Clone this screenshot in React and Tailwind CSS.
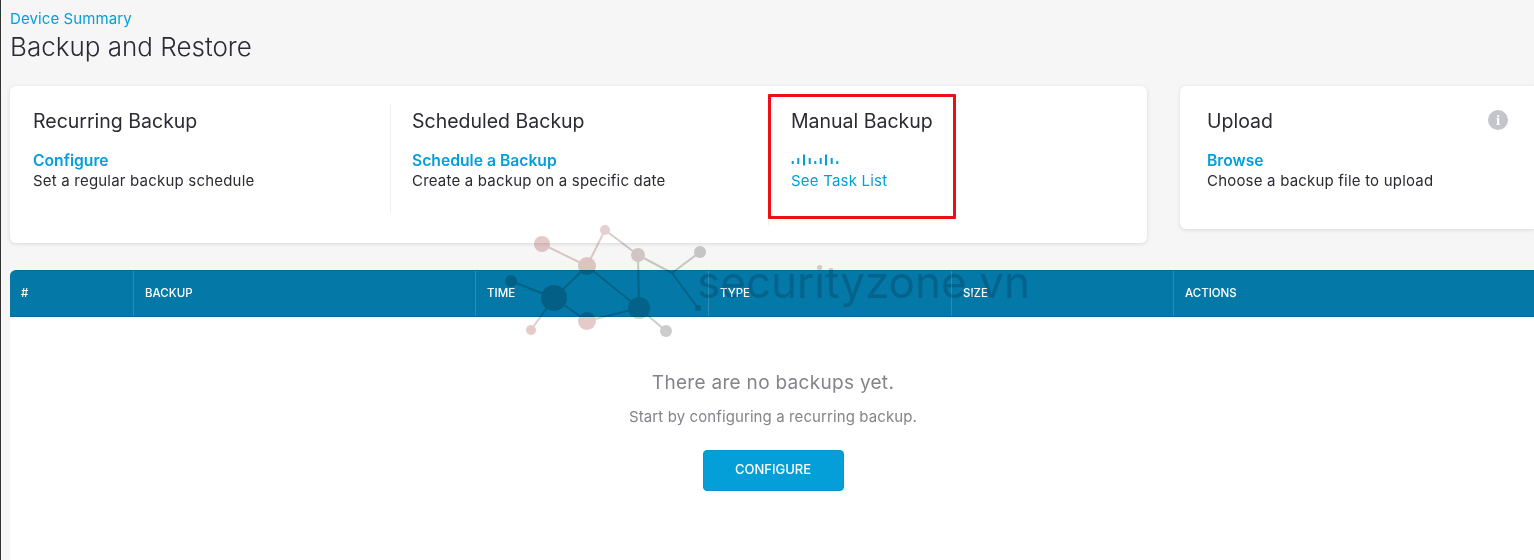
const columns = [
  { label: "#", width: "w-[124px]" },
  { label: "BACKUP", width: "w-[342px]" },
  { label: "TIME", width: "w-[233px]" },
  { label: "TYPE", width: "w-[243px]" },
  { label: "SIZE", width: "w-[222px]" },
  { label: "ACTIONS", width: "flex-1" },
];

function CiscoBars() {
  const bars = [
    [1.7, 7, 3],
    [7.3, 4, 6],
    [13, 0.5, 11],
    [18.7, 4, 6],
    [24.3, 7, 3],
    [29.7, 4, 6],
    [35, 0.5, 11],
    [40.7, 4, 6],
    [46.3, 7, 3],
  ];
  return (
    <div className="pt-[3px]">
      <svg width="48" height="12" viewBox="0 0 48 12" className="block">
        {bars.map(([x, y, h]) => (
          <rect key={x} x={x - 1} y={y} width="2" height={h} fill="#049fd9" />
        ))}
      </svg>
    </div>
  );
}

function Watermark() {
  const lines = [
    [42, 24, 87, 46, "#e2cccc"], [87, 46, 105, 10, "#e2cccc"], [105, 10, 138, 35, "#d8cccc"],
    [138, 35, 172, 53, "#d0cccc"], [200, 32, 172, 53, "#cccccc"], [172, 53, 198, 88, "#cccccc"],
    [87, 46, 54, 78, "#d8cccc"], [87, 46, 139, 88, "#d8cccc"], [138, 35, 139, 88, "#d0cccc"],
    [11, 61, 54, 78, "#d8cccc"], [54, 78, 87, 101, "#e2cccc"], [87, 101, 139, 88, "#e2cccc"],
    [54, 78, 31, 110, "#e2cccc"], [139, 88, 166, 111, "#cccccc"],
  ];
  const nodes = [
    [42, 24, 8, "#e6caca"], [105, 10, 5, "#e4d0d0"], [87, 46, 9, "#e6caca"], [138, 35, 7, "#d8cccc"],
    [200, 32, 6, "#cccccc"], [11, 61, 6, "#d8c8c8"], [54, 78, 13, "#d8c8c8"], [139, 88, 11, "#cfcfcf"],
    [198, 88, 3, "#cccccc"], [87, 101, 9, "#e6caca"], [31, 110, 5, "#e6caca"], [166, 111, 6, "#cccccc"],
  ];
  return (
    <svg width="215" height="120" viewBox="0 0 215 120" className="block">
      {lines.map(([a, b, c, d, color]) => (
        <line key={`${a}-${b}-${c}`} x1={a} y1={b} x2={c} y2={d} stroke={color} strokeWidth="2" />
      ))}
      {nodes.map(([cx, cy, r, color]) => (
        <circle key={`${cx}-${cy}`} cx={cx} cy={cy} r={r} fill={color} />
      ))}
    </svg>
  );
}

function BackupSection({ title, link, text, className, children }) {
  return (
    <div className={className}>
      <h2 className="pt-[5px] text-[19.5px] leading-6 text-[#2b2b33]">{title}</h2>
      <div className="mt-[18px]">
        {link && <a className="block text-[15.7px] leading-5 font-semibold text-[#049fd9]">{link}</a>}
        {children}
        {text && <p className="text-[15px] leading-5 tracking-[0.2px] text-[#2b2b33]">{text}</p>}
      </div>
    </div>
  );
}

export default function App() {
  return (
    <div className="relative h-[560px] overflow-hidden bg-[#f6f6f6] border-l border-[#333] pl-[9px] font-['Inter',sans-serif]">
      <div className="pt-[11px]">
        <a className="block text-[15px] leading-4 tracking-[0.1px] text-[#049fd9]">Device Summary</a>
        <h1 className="mt-[4px] text-[26px] leading-8 font-light text-[#2b2b33]">Backup and Restore</h1>
      </div>

      <div className="mt-[23px] flex items-start gap-[33px]">
        <div className="flex h-[157px] w-[1137px] shrink-0 rounded-md bg-white pl-[23px] pt-[18px] shadow-[0_1px_4px_rgba(0,0,0,0.12)]">
          <BackupSection
            title="Recurring Backup"
            link="Configure"
            text="Set a regular backup schedule"
            className="h-[108px] w-[358px] border-r border-[#eeeeee]"
          />
          <BackupSection
            title="Scheduled Backup"
            link="Schedule a Backup"
            text="Create a backup on a specific date"
            className="h-[121px] w-[378px] border-r border-[#eeeeee] pl-[21px]"
          />
          <BackupSection title="Manual Backup" className="pl-[22px]">
            <CiscoBars />
            <a className="mt-[5px] block text-[15px] leading-5 tracking-[0.2px] text-[#049fd9]">See Task List</a>
          </BackupSection>
        </div>

        <div className="relative h-[143px] flex-1 rounded-l-md bg-white pl-[27px] pt-[18px] shadow-[0_1px_4px_rgba(0,0,0,0.12)]">
          <BackupSection title="Upload" link="Browse" text="Choose a backup file to upload" />
          <span className="absolute left-[308px] top-[24px] flex h-5 w-5 items-center justify-center rounded-full bg-[#c4c5ca] font-['Liberation_Serif',serif] text-[15px] font-bold text-white">
            i
          </span>
        </div>
      </div>

      <div className="mt-[27px] h-[290px] rounded-tl-md bg-white">
        <div className="flex h-[47px] rounded-tl-md border-y border-[#056a94] bg-[#0479a8]">
          {columns.map((col, i) => (
            <div
              key={col.label}
              className={`${col.width} flex items-center pl-[11px] text-[11.5px] font-medium text-white ${i < columns.length - 1 ? "border-r border-[#2a8db5]" : ""}`}
            >
              {col.label}
            </div>
          ))}
        </div>
        <div className="flex flex-col items-center pl-[2px] pt-[52px]">
          <p className="text-[19px] leading-7 tracking-[0.3px] text-[#84848a]">There are no backups yet.</p>
          <p className="mt-[10px] text-[15px] leading-5 tracking-[0.1px] text-[#84848a]">Start by configuring a recurring backup.</p>
          <button className="mt-[23px] h-[41px] w-[141px] rounded-[4px] border border-[#0a94c9] bg-[#049fd9] pb-[2px] text-[13px] font-medium text-white">
            CONFIGURE
          </button>
        </div>
      </div>

      {/* watermark and red annotation sit on top of the page */}
      <div className="absolute left-[499px] top-[220px] mix-blend-multiply">
        <Watermark />
      </div>
      <span className="absolute left-[696px] top-[257px] text-[44px] leading-[50px] text-[#e0d0d6] mix-blend-multiply">
        securityzone.vn
      </span>
      <div className="absolute left-[767px] top-[94px] h-[125px] w-[188px] rounded-[1px] border-[3px] border-[#ee0f16]" />
    </div>
  );
}
